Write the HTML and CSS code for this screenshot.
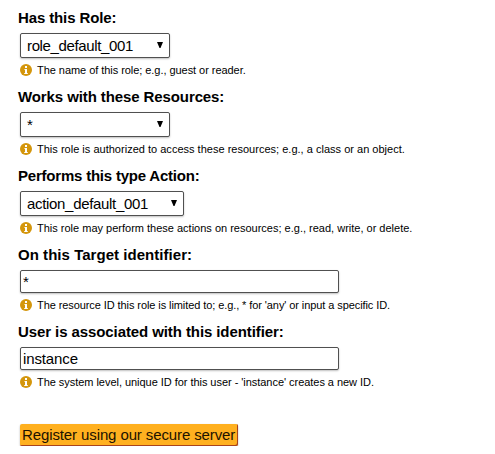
FILE: index.html
```html
<!DOCTYPE html>
<html lang="en">
<head>
<meta charset="utf-8">
<title>Register</title>
<link rel="stylesheet" href="styles.css">
</head>
<body>
<svg width="0" height="0" class="defs" aria-hidden="true">
  <symbol id="info" viewBox="0 0 12 12">
    <circle cx="6" cy="6" r="6" fill="#d4960c"/>
    <path d="M5 2h2v2H5zM4.5 5H7v4h.8v1H4.2V9H5V6h-.5z" fill="#fff"/>
  </symbol>
  <symbol id="arrow" viewBox="0 0 6 6">
    <path d="M0 0h6L3.5 6h-1z" fill="#000"/>
  </symbol>
</svg>
<form class="form">
  <div class="field">
    <label class="label l1">Has this Role:</label>
    <div class="select"><span class="v1">role_default_001</span><svg class="arrow"><use href="#arrow"/></svg></div>
    <p class="help"><svg class="info"><use href="#info"/></svg><span class="h1">The name of this role; e.g., guest or reader.</span></p>
  </div>
  <div class="field">
    <label class="label l2">Works with these Resources:</label>
    <div class="select"><span>*</span><svg class="arrow"><use href="#arrow"/></svg></div>
    <p class="help"><svg class="info"><use href="#info"/></svg><span class="h2">This role is authorized to access these resources; e.g., a class or an object.</span></p>
  </div>
  <div class="field">
    <label class="label l3">Performs this type Action:</label>
    <div class="select wide"><span class="v3">action_default_001</span><svg class="arrow"><use href="#arrow"/></svg></div>
    <p class="help"><svg class="info"><use href="#info"/></svg><span class="h3">This role may perform these actions on resources; e.g., read, write, or delete.</span></p>
  </div>
  <div class="field">
    <label class="label l4" for="target">On this Target identifier:</label>
    <input class="input" id="target" type="text" value="*">
    <p class="help"><svg class="info"><use href="#info"/></svg><span class="h4">The resource ID this role is limited to; e.g., * for 'any' or input a specific ID.</span></p>
  </div>
  <div class="field">
    <label class="label l5" for="user">User is associated with this identifier:</label>
    <input class="input v5" id="user" type="text" value="instance">
    <p class="help"><svg class="info"><use href="#info"/></svg><span class="h5">The system level, unique ID for this user - 'instance' creates a new ID.</span></p>
  </div>
  <button class="button" type="button">Register using our secure server</button>
</form>
</body>
</html>
```
FILE: styles.css
```css
* { box-sizing: border-box; }
body {
  margin: 0;
  background: #fff;
  color: #000;
  font-family: "Liberation Sans", Arial, sans-serif;
}
.defs { position: absolute; }
.form { padding: 9px 0 0 20px; }
.field { margin-bottom: 11px; }
.label {
  display: block;
  width: max-content;
  height: 18px;
  margin: 0 0 6px -2px;
  font-size: 15px;
  font-weight: bold;
  line-height: 18px;
  white-space: nowrap;
}
.select, .input {
  border: 1px solid #505050;
  border-radius: 2px;
  background: #fff;
  box-shadow: 0 1px 2px rgba(0, 0, 0, .25);
  color: #000;
  font-family: inherit;
  font-size: 15px;
}
.select {
  display: flex;
  align-items: center;
  justify-content: space-between;
  width: 150px;
  height: 25px;
  padding: 0 6px;
  line-height: 23px;
}
.wide { width: 164px; }
.arrow { width: 6px; height: 6px; margin-top: -2px; }
.input {
  display: block;
  width: 319px;
  height: 23px;
  padding: 0 2px;
}
.help {
  display: flex;
  align-items: center;
  gap: 5px;
  height: 14px;
  margin: 5px 0 0;
  font-size: 11px;
  line-height: 14px;
  white-space: nowrap;
}
.info { width: 12px; height: 12px; }
.l1 { letter-spacing: -.12px; }
.l2 { letter-spacing: -.1px; }
.l3 { letter-spacing: -.21px; }
.l4 { letter-spacing: .04px; }
.l5 { letter-spacing: -.09px; }
.v1 { letter-spacing: -.36px; }
.v3 { letter-spacing: -.32px; }
.v5 { letter-spacing: -.12px; }
.h1 { letter-spacing: -.05px; }
.h2 { letter-spacing: .013px; }
.h4 { letter-spacing: -.085px; }
.h5 { letter-spacing: -.04px; }
.button {
  display: block;
  width: 218px;
  height: 22px;
  margin-top: 35px;
  padding: 0 2px;
  border: 0;
  border-radius: 2px;
  background: #ffb01f;
  box-shadow: inset -1px -1px 0 #a8431c, 0 1px 2px rgba(0, 0, 0, .3);
  color: #1c1200;
  font-family: inherit;
  font-size: 15px;
  letter-spacing: -.11px;
  line-height: 22px;
  text-align: left;
  white-space: nowrap;
}
```
